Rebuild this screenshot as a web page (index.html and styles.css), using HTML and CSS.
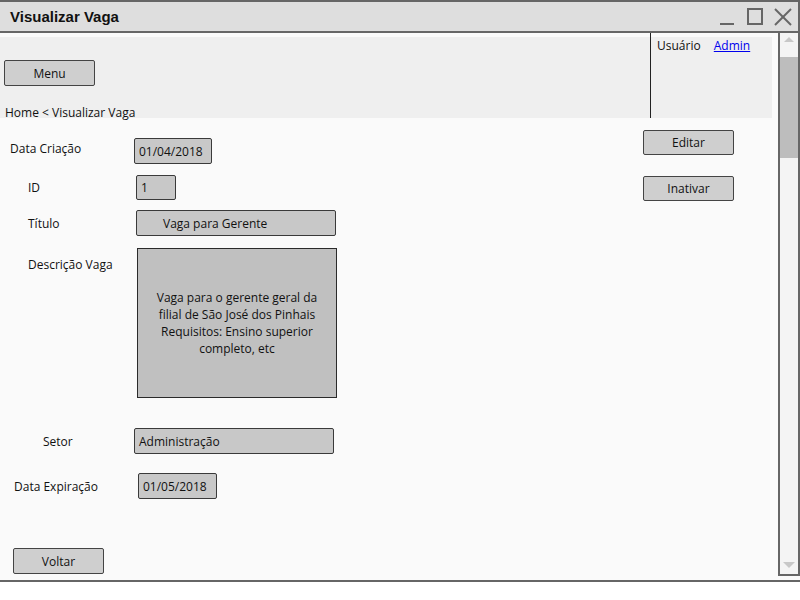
FILE: index.html
```html
<!DOCTYPE html>
<html lang="pt">
<head>
<meta charset="utf-8">
<title>Visualizar Vaga</title>
<link rel="stylesheet" href="styles.css">
</head>
<body>
<div class="window">
  <div class="titlebar">
    <span class="title">Visualizar Vaga</span>
    <svg class="controls" width="82" height="29" viewBox="0 0 82 29">
      <line x1="4" y1="22" x2="18" y2="22" stroke="#666" stroke-width="2"/>
      <rect x="32" y="7" width="14" height="15" fill="none" stroke="#666" stroke-width="2"/>
      <line x1="59" y1="7" x2="75" y2="23" stroke="#666" stroke-width="2"/>
      <line x1="75" y1="7" x2="59" y2="23" stroke="#666" stroke-width="2"/>
    </svg>
  </div>
  <div class="body">
    <div class="main">
      <div class="header">
        <div class="header-left">
          <div class="btn btn-menu">Menu</div>
          <div class="breadcrumb">Home &lt; Visualizar Vaga</div>
        </div>
        <div class="sep"></div>
        <div class="header-right">
          <span class="user">Usuário</span>
          <a class="admin" href="#">Admin</a>
        </div>
      </div>
      <div class="content">
        <div class="form">
          <div class="row row-1">
            <span class="label l-1">Data Criação</span>
            <div class="field f-1">01/04/2018</div>
          </div>
          <div class="row row-2">
            <span class="label l-2">ID</span>
            <div class="field f-2">1</div>
          </div>
          <div class="row row-3">
            <span class="label l-3">Título</span>
            <div class="field f-3">Vaga para Gerente</div>
          </div>
          <div class="row row-4">
            <span class="label l-4">Descrição Vaga</span>
            <div class="textarea">Vaga para o gerente geral da filial de São José dos Pinhais Requisitos: Ensino superior completo, etc</div>
          </div>
          <div class="row row-5">
            <span class="label l-5">Setor</span>
            <div class="field f-5">Administração</div>
          </div>
          <div class="row row-6">
            <span class="label l-6">Data Expiração</span>
            <div class="field f-6">01/05/2018</div>
          </div>
          <div class="btn btn-voltar">Voltar</div>
        </div>
        <div class="actions">
          <div class="btn btn-action">Editar</div>
          <div class="btn btn-action btn-inativar">Inativar</div>
        </div>
      </div>
    </div>
    <div class="scrollbar">
      <div class="sb-top"><span class="arrow-up"></span></div>
      <div class="sb-thumb"></div>
      <div class="sb-track"><span class="arrow-down"></span></div>
    </div>
  </div>
</div>
</body>
</html>
```

FILE: styles.css
```css
html, body {
  margin: 0;
  padding: 0;
  background: #ffffff;
}

body {
  font-family: "Open Sans", "Noto Sans", sans-serif;
  font-size: 12px;
  color: #111;
}

.window {
  width: 800px;
  height: 582px;
  box-sizing: border-box;
  border-top: 2px solid #666;
  border-bottom: 2px solid #666;
  background: #fafafa;
  display: flex;
  flex-direction: column;
}

.titlebar {
  height: 29px;
  flex: none;
  box-sizing: content-box;
  border-bottom: 2px solid #666;
  border-right: 2px solid #666;
  background: #dedede;
  display: flex;
  align-items: center;
  padding-left: 10px;
}

.title {
  font-family: "Liberation Sans", Arial, sans-serif;
  font-weight: bold;
  font-size: 15px;
  color: #111;
}

.controls {
  margin-left: auto;
  display: block;
}

.body {
  flex: 1;
  display: flex;
  min-height: 0;
}

.main {
  width: 778px;
  display: flex;
  flex-direction: column;
}

.header {
  width: 772px;
  height: 85px;
  display: flex;
  flex: none;
}

.header-left {
  width: 650px;
  margin-top: 4px;
  background: #efefef;
  display: flex;
  flex-direction: column;
}

.header-left > * {
  flex: none;
}

.sep {
  width: 1px;
  background: #222;
}

.header-right {
  flex: 1;
  margin-top: 4px;
  background: #efefef;
  padding-left: 6px;
  line-height: 18px;
  font-size: 12px;
}

.admin {
  color: #0000ee;
  margin-left: 10px;
}

.btn {
  box-sizing: border-box;
  width: 91px;
  height: 26px;
  border: 1px solid #444;
  border-radius: 2px;
  background: #cfcfcf;
  display: flex;
  align-items: center;
  justify-content: center;
  font-size: 12px;
}

.btn-menu {
  margin-top: 23px;
  margin-left: 4px;
}

.breadcrumb {
  margin-top: 19px;
  margin-left: 5px;
  line-height: 16px;
  height: 16px;
  font-size: 12px;
}

.content {
  flex: 1;
  display: flex;
}

.form {
  width: 643px;
  display: flex;
  flex-direction: column;
}

.row {
  display: grid;
  grid-template-columns: 134px auto;
  align-items: center;
}

.row-1 { margin-top: 20px; }
.row-2 { margin-top: 11px; }
.row-3 { margin-top: 10px; }
.row-4 { margin-top: 12px; align-items: start; }
.row-5 { margin-top: 30px; }
.row-6 { margin-top: 19px; }

.label { white-space: nowrap; }
.l-1 { padding-left: 10px; margin-top: -5px; }
.l-2 { padding-left: 28px; }
.l-3 { padding-left: 28px; }
.l-4 { padding-left: 28px; margin-top: 8px; }
.l-5 { padding-left: 43px; }
.l-6 { padding-left: 14px; }

.field {
  box-sizing: border-box;
  height: 26px;
  border: 1px solid #3a3a3a;
  border-radius: 2px;
  background: #c8c8c8;
  display: flex;
  align-items: center;
  padding-left: 4px;
}

.f-1 { width: 78px; }
.f-2 { width: 40px; height: 25px; margin-left: 2px; }
.f-3 { width: 200px; margin-left: 2px; padding-left: 26px; }
.f-5 { width: 200px; }
.f-6 { width: 79px; margin-left: 4px; }

.textarea {
  box-sizing: border-box;
  width: 200px;
  height: 150px;
  margin-left: 3px;
  border: 1px solid #2a2a2a;
  background: #c0c0c0;
  display: flex;
  align-items: center;
  justify-content: center;
  text-align: center;
  padding: 0 14px;
  line-height: 17px;
}

.btn-voltar {
  margin-top: 49px;
  margin-left: 13px;
}

.actions {
  display: flex;
  flex-direction: column;
}

.btn-action {
  margin-top: 12px;
  height: 25px;
}

.btn-inativar {
  margin-top: 21px;
}

.scrollbar {
  width: 22px;
  height: 543px;
  box-sizing: border-box;
  border-left: 2px solid #666;
  border-right: 2px solid #666;
  border-bottom: 2px solid #666;
  background: #f4f4f4;
  display: flex;
  flex-direction: column;
}

.sb-top {
  height: 24px;
  display: flex;
  justify-content: center;
  padding-top: 4px;
  box-sizing: border-box;
}

.arrow-up {
  width: 0;
  height: 0;
  border-left: 5px solid transparent;
  border-right: 5px solid transparent;
  border-bottom: 5px solid #c8c8c8;
}

.sb-thumb {
  height: 101px;
  background: #bdbdbd;
}

.sb-track {
  flex: 1;
  display: flex;
  justify-content: center;
  align-items: flex-end;
  padding-bottom: 6px;
}

.arrow-down {
  width: 0;
  height: 0;
  border-left: 6px solid transparent;
  border-right: 6px solid transparent;
  border-top: 6px solid #c8c8c8;
}
```
